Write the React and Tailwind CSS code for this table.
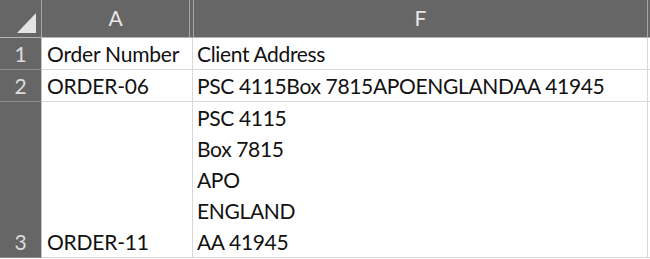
const font = { fontFamily: 'Lato, "Liberation Sans", Arial, sans-serif' };

const rows = [
  { n: 1, a: "Order Number", f: ["Client Address"] },
  { n: 2, a: "ORDER-06", f: ["PSC 4115Box 7815APOENGLANDAA 41945"] },
  { n: 3, a: "ORDER-11", f: ["PSC 4115", "Box 7815", "APO", "ENGLAND", "AA 41945"] },
];

function ColumnHeader() {
  return (
    <div className="flex h-[38px] border-b border-[#b4b4b4] bg-[#666666] text-[21px] text-[#e6e6e6]">
      <div className="relative w-[42px] shrink-0 border-r border-[#a6a6a6]">
        <svg className="absolute left-0 top-0" width="41" height="37" viewBox="0 0 41 37">
          <polygon points="17,33 36,33 36,13" fill="#e4e4e4" />
        </svg>
      </div>
      <div className="flex w-[148px] shrink-0 items-center justify-center border-r border-[#a6a6a6] pb-[2px]">
        A
      </div>
      <div className="w-[4px] shrink-0 border-r border-[#a6a6a6]" />
      <div className="flex w-[454px] shrink-0 items-center justify-center border-r border-[#a6a6a6] pb-[2px]">
        F
      </div>
      <div className="flex-1" />
    </div>
  );
}

function Row({ n, a, f }) {
  return (
    <div className="flex border-b border-[#d8d8d8] text-[21px] leading-[31px]">
      <div className="flex w-[42px] shrink-0 items-end justify-center border-r border-b border-r-[#c4c4c4] border-b-[#8a8a8a] bg-[#666666] text-[#dcdcdc] -mb-px">
        {n}
      </div>
      <div className="flex w-[151px] shrink-0 items-end border-r border-[#d8d8d8] pl-[5px] tracking-[-0.2px] text-[#111111]">
        {a}
      </div>
      <div className="flex w-[455px] shrink-0 flex-col justify-end border-r border-[#d8d8d8] pl-[4px] tracking-[-0.35px] text-[#111111]">
        {f.map((line) => (
          <div key={line} className="whitespace-nowrap">
            {line}
          </div>
        ))}
      </div>
      <div className="flex-1 bg-white" />
    </div>
  );
}

export default function App() {
  return (
    <div className="h-[259px] w-[650px] overflow-hidden bg-white" style={font}>
      <ColumnHeader />
      {rows.map((r) => (
        <Row key={r.n} {...r} />
      ))}
    </div>
  );
}
